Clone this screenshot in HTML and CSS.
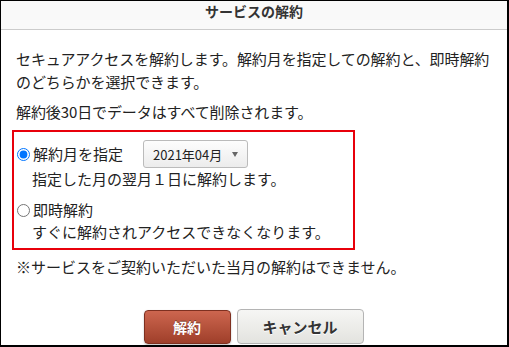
FILE: index.html
```html
<!DOCTYPE html>
<html lang="ja">
<head>
  <meta charset="UTF-8">
  <title>サービスの解約</title>
  <link rel="stylesheet" href="styles.css">
</head>
<body>
  <div class="dialog">
    <div class="dialog-header">サービスの解約</div>

    <div class="dialog-body">
      <p class="lead">セキュアアクセスを解約します。解約月を指定しての解約と、即時解約<br>のどちらかを選択できます。</p>
      <p class="lead">解約後30日でデータはすべて削除されます。</p>

      <div class="options">
        <div class="option-row">
          <label class="option-label"><input type="radio" name="cancel-type" checked>解約月を指定</label>
          <button class="month-select" type="button">2021年04月<span class="arrow"></span></button>
        </div>
        <div class="option-note">指定した月の翌月１日に解約します。</div>

        <div class="option-row second">
          <label class="option-label"><input type="radio" name="cancel-type">即時解約</label>
        </div>
        <div class="option-note">すぐに解約されアクセスできなくなります。</div>
      </div>

      <p class="notice">※サービスをご契約いただいた当月の解約はできません。</p>

      <div class="actions">
        <button class="btn btn-danger" type="button">解約</button>
        <button class="btn btn-cancel" type="button">キャンセル</button>
      </div>
    </div>
  </div>
</body>
</html>
```

FILE: styles.css
```css
/* Page */
html, body {
  margin: 0;
  padding: 0;
  background: #fff;
}
body {
  font-family: "Noto Sans CJK JP", "Noto Sans", sans-serif;
  color: #222;
}

/* Dialog frame */
.dialog {
  width: 509px;
  height: 347px;
  box-sizing: border-box;
  border-style: solid;
  border-color: #000;
  border-width: 1px 2px 2px 1px;
  background: #fff;
}

/* Header */
.dialog-header {
  height: 20px;
  padding: 0 0 8px;
  line-height: 20px;
  background: #f9f9f9;
  border-bottom: 1px solid #ccc;
  text-align: center;
  font-size: 14px;
  font-weight: bold;
  color: #333;
}

/* Body */
.dialog-body {
  padding: 17px 8px 0 15px;
  font-size: 15px;
}
.lead {
  margin: 0 0 7px;
  line-height: 23px;
  white-space: nowrap;
  letter-spacing: -0.1px;
}

/* Options box */
.options {
  margin: 3px 0 0 -4px;
  width: 337px;
  padding: 8px 0 5px 2px;
  border: 2px solid #e8000b;
}
.option-row {
  display: flex;
  align-items: center;
  height: 28px;
}
.option-row.second {
  margin-top: 9px;
  height: 22px;
}
.option-label {
  display: flex;
  align-items: center;
  width: 127px;
  line-height: 22px;
}
.option-label input {
  width: 13px;
  height: 13px;
  margin: 0 3px 0 1px;
}
.option-note {
  padding-left: 16px;
  line-height: 22px;
}

/* Month dropdown */
.month-select {
  display: flex;
  align-items: center;
  justify-content: space-between;
  width: 105px;
  height: 28px;
  padding: 0 9px 0 9px;
  border: 1px solid #bbb;
  border-radius: 3px;
  background: linear-gradient(#fdfdfd, #ececec);
  font-family: inherit;
  font-size: 13px;
  color: #222;
}
.month-select .arrow {
  width: 0;
  height: 0;
  border-left: 3.5px solid transparent;
  border-right: 3.5px solid transparent;
  border-top: 5px solid #666;
}

.notice {
  margin: 5px 0 0;
  line-height: 23px;
}

/* Buttons */
.actions {
  display: flex;
  justify-content: center;
  align-items: center;
  gap: 6px;
  margin: 30px 0 0 -8px;
}
.btn {
  height: 35px;
  border-radius: 4px;
  font-family: inherit;
  font-size: 14px;
  font-weight: bold;
}
.btn-danger {
  width: 87px;
  height: 34px;
  margin-top: 2px;
  border: 1px solid #7e3020;
  background: linear-gradient(#cd664f, #9f3f2a);
  color: #fff;
  text-shadow: 0 -1px 0 rgba(0,0,0,0.4);
  box-shadow: 0 1px 2px rgba(0,0,0,0.25);
}
.btn-cancel {
  width: 127px;
  border: 1px solid #b4b4b4;
  background: linear-gradient(#f6f6f4, #e3e3df);
  color: #333;
  font-size: 15px;
  text-shadow: 0 1px 0 #fff;
}
```
